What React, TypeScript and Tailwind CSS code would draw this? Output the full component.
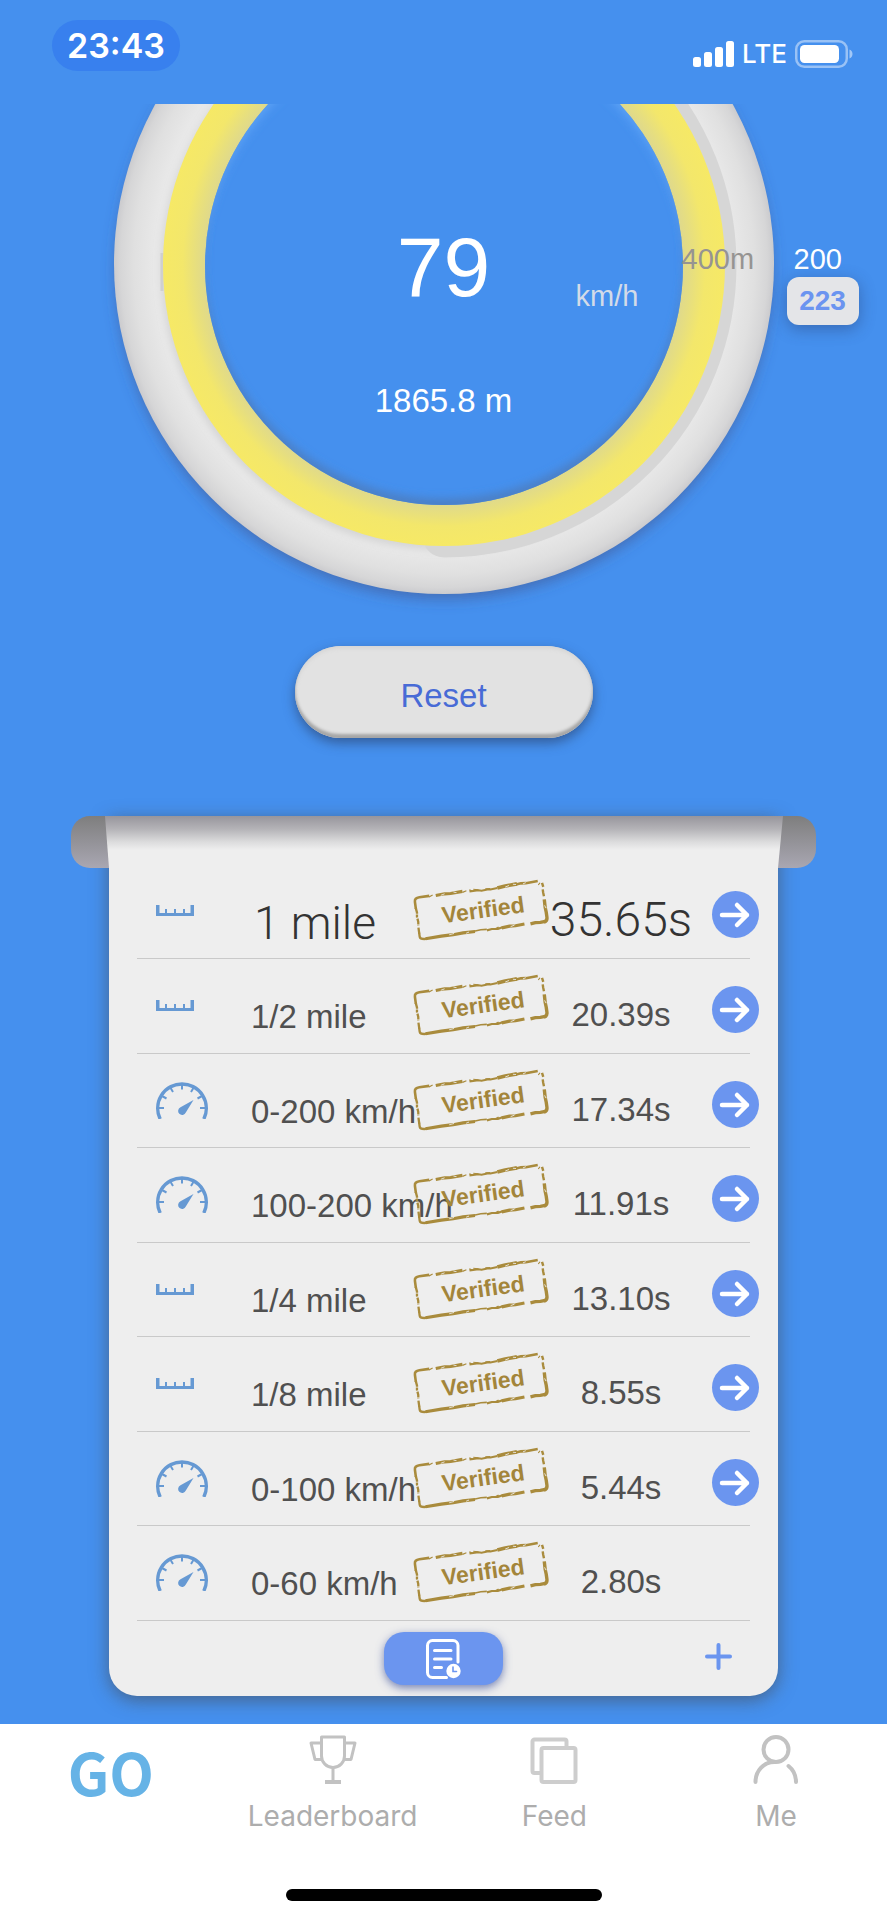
import React from "react";

interface RunResult {
    kind: "distance" | "speed";
    label: string;
    time: string;
    hasDetails: boolean;
}

const results: RunResult[] = [
    { kind: "distance", label: "1 mile", time: "35.65s", hasDetails: true },
    { kind: "distance", label: "1/2 mile", time: "20.39s", hasDetails: true },
    { kind: "speed", label: "0-200 km/h", time: "17.34s", hasDetails: true },
    { kind: "speed", label: "100-200 km/h", time: "11.91s", hasDetails: true },
    { kind: "distance", label: "1/4 mile", time: "13.10s", hasDetails: true },
    { kind: "distance", label: "1/8 mile", time: "8.55s", hasDetails: true },
    { kind: "speed", label: "0-100 km/h", time: "5.44s", hasDetails: true },
    { kind: "speed", label: "0-60 km/h", time: "2.80s", hasDetails: false },
];

function StatusBar() {
    return (
        <header className="flex h-[104px] items-start justify-between pl-[52px] pr-[34px] font-['Inter',sans-serif] text-white">
            <div className="mt-5 flex h-[51px] w-32 items-center justify-center rounded-[26px] bg-[#3880ee] text-[34px] font-semibold leading-none">
                23:43
            </div>
            <div className="mt-[38px] flex h-8 items-center gap-2">
                <svg className="h-[26px] w-[41px]" viewBox="0 0 41 26" fill="currentColor" aria-hidden="true">
                    <rect x="0" y="16" width="8" height="10" rx="2.5" />
                    <rect x="11" y="11" width="8" height="15" rx="2.5" />
                    <rect x="22" y="6" width="8" height="20" rx="2.5" />
                    <rect x="33" y="0" width="8" height="26" rx="2.5" />
                </svg>
                <span className="text-[26px] font-medium leading-none">LTE</span>
                <svg className="h-[28px] w-[58px]" viewBox="0 0 58 28" aria-hidden="true">
                    <rect x="1.25" y="1.25" width="50.5" height="25.5" rx="8" fill="none" stroke="#fff" strokeOpacity="0.45" strokeWidth="2.5" />
                    <rect x="5" y="5" width="39" height="18" rx="4.5" fill="#fff" />
                    <path d="M54.5 9.5c4 1.6 4 7.400 0 9z" fill="#fff" fillOpacity="0.5" />
                </svg>
            </div>
        </header>
    );
}

// Speed dial, cut off by the status bar at the top
function Dial() {
    return (
        <section className="relative mx-auto w-[830px] max-w-full font-['Liberation_Sans',Arial,sans-serif]">
            <svg className="block h-[520px] w-full" viewBox="0 0 830 520" aria-hidden="true">
                <defs>
                    <radialGradient id="rim" gradientUnits="userSpaceOnUse" cx="415" cy="160" r="330">
                        <stop offset="0.88" stopColor="#e8e8e8" />
                        <stop offset="0.94" stopColor="#e0e0e0" />
                        <stop offset="0.98" stopColor="#d6d6d7" />
                        <stop offset="1" stopColor="#cbcbce" />
                    </radialGradient>
                    <radialGradient id="band" gradientUnits="userSpaceOnUse" cx="415" cy="161" r="281">
                        <stop offset="0.85" stopColor="#dfd98c" />
                        <stop offset="0.88" stopColor="#e6de80" />
                        <stop offset="0.93" stopColor="#f3e76b" />
                        <stop offset="1" stopColor="#f6e966" />
                    </radialGradient>
                    <filter id="soft" x="-20%" y="-20%" width="140%" height="140%">
                        <feGaussianBlur stdDeviation="7" />
                    </filter>
                    <filter id="softer" x="-20%" y="-20%" width="140%" height="140%">
                        <feGaussianBlur stdDeviation="4" />
                    </filter>
                    <clipPath id="hole">
                        <circle cx="415" cy="162" r="239" />
                    </clipPath>
                </defs>
                <circle cx="415" cy="167" r="328" fill="#3f4a80" fillOpacity="0.5" filter="url(#soft)" />
                <circle cx="415" cy="160" r="330" fill="url(#rim)" />
                <circle cx="413" cy="165" r="280" fill="#bdbdbd" fillOpacity="0.5" filter="url(#softer)" />
                <path d="M415 -110a271 271 0 0 1 0 542" fill="none" stroke="#d6d6d6" strokeWidth="43" strokeLinecap="round" />
                <path d="M133 149v38" stroke="#cfcfcf" strokeWidth="3" />
                <circle cx="415" cy="161" r="281" fill="url(#band)" />
                <circle cx="415" cy="162" r="239" fill="#4590ee" />
                <g clipPath="url(#hole)">
                    <circle cx="415" cy="155" r="246" fill="none" stroke="#4c7fc4" strokeWidth="12" filter="url(#softer)" />
                    <circle cx="415" cy="172" r="251" fill="none" stroke="#5aa0f5" strokeWidth="18" filter="url(#softer)" />
                </g>
            </svg>
            <p className="absolute inset-x-0 top-[121px] text-center text-[84px] leading-[84px] text-white">79</p>
            <p className="absolute left-[547px] top-[178px] text-[29px] leading-[29px] text-[#d3dbe8]">km/h</p>
            <p className="absolute inset-x-0 top-[280px] text-center text-[33px] leading-[33px] text-white">1865.8 m</p>
            <p className="absolute left-[653px] top-[141px] text-[29px] leading-[29px] text-[#969492]">400m</p>
            <p className="absolute left-[765px] top-[141px] text-[29px] leading-[29px] text-white">200</p>
            <p className="absolute right-0 top-[173px] flex h-12 w-[72px] items-center justify-center rounded-xl bg-[#e4e5e8] text-[28px] font-bold leading-none text-[#6b94f0] shadow-[0_4px_16px_rgba(40,60,110,0.45)]">
                223
            </p>
        </section>
    );
}

function RulerIcon() {
    return (
        <svg className="mt-[41px] ml-[19px] h-[11px] w-[38px]" viewBox="0 0 38 11" fill="#6699d3" role="img" aria-label="Distance">
            <path d="M0 0h3.500v8h31V0H38v11H0z" />
            <path d="M9 4h2v5H9zM18 4h2v5h-2zM27 4h2v5h-2z" />
        </svg>
    );
}

function GaugeIcon() {
    return (
        <svg className="mt-7 ml-[19px] h-[37px] w-[52px]" viewBox="0 0 52 37" fill="none" stroke="#6699d3" role="img" aria-label="Speed">
            <path d="M4.200 37A24.300 24.300 0 1 1 47.800 37" strokeWidth="3.400" />
            <path d="M26 2v5.500M2 26h6M50 26h-6M5 13.500l5.500 3M47 13.500l-5.500 3M14 5l3 5M38 5l-3 5" strokeWidth="2" />
            <path d="M37.500 18l-7.700 12.500a4 4 0 1 1-5.300-5.200z" fill="#6699d3" stroke="none" />
        </svg>
    );
}

function VerifiedStamp() {
    return (
        <svg className="mt-[15px] block h-[62px] w-[136px]" viewBox="0 0 136 62" role="img" aria-label="Verified">
            <g transform="rotate(-7.800 68 30)">
                <g transform="translate(3 9)" fill="none" stroke="#a98b3c" strokeLinecap="butt">
                    <path d="M.5 12V5q0-4 5-4h10" strokeWidth="2.600" />
                    <path d="M15 2l4-1.500M49 2l4-1M56 .5l3 1.500M125 5l2-2" strokeWidth="1.200" />
                    <path d="M22 1.500l9-.5 6 .5 12-.5" strokeWidth="3.200" />
                    <path d="M56 2l9 0 3 1 6-.5 3 .5 7-.5" strokeWidth="2" />
                    <path d="M60 .5l5 1M72 1.500l5 .5" strokeWidth="1" />
                    <path d="M84 2.500l7-1 13-.5" strokeWidth="3.600" />
                    <path d="M102 1.500l6-.5 5 .5 12-.5" strokeWidth="2.600" />
                    <path d="M129 3.500l.7 4M128.800 10v3l.3 4" strokeWidth="2.400" />
                    <path d="M129 20l-.2 8 .4 5v5q0 4-3.500 4.500" strokeWidth="3.400" />
                    <path d="M112 42.500l5-.6 5 .4 5-.3" strokeWidth="3.400" />
                    <path d="M106 41.800l-9 .5-6-.4-8 .6" strokeWidth="3.200" />
                    <path d="M84 42l-5 1-6-.7-5 .7" strokeWidth="2.200" />
                    <path d="M80 41.500l-3 1M68 42l-6-.5-7 .5" strokeWidth="1.600" />
                    <path d="M56 42.500l-12-.3-10 .5-12-.2-16 .4" strokeWidth="3.200" />
                    <path d="M8 43.200q-7.500 0-7.500-3v-4" strokeWidth="2.300" />
                    <path d="M.5 11l.6 5-.6 4 .6 5-.4 4M.5 31l0 6" strokeWidth="2.300" strokeDasharray="6 .8 3 1.200" />
                    {/* worn spots in the ink */}
                    <path d="M27 2l4-1M40 .5l3 1M92 2.500l4-1M100 .8l3 .7M110 1.800l3-.8M92 42.500l4-1M30 42.200l5-.6M47 43l3-.8M128.500 26l1 3" stroke="#eeeeee" strokeWidth="0.800" />
                </g>
                <text
                    x="70"
                    y="39"
                    textAnchor="middle"
                    fill="#a3853a"
                    className="font-['Liberation_Sans',Arial,sans-serif] text-[23px] font-bold"
                >
                    Verified
                </text>
            </g>
        </svg>
    );
}

function ResultRow({ result, best }: { result: RunResult; best: boolean }) {
    return (
        <tr className="h-[94px] border-b border-[#c9c9c9] align-top">
            <td>{result.kind === "distance" ? <RulerIcon /> : <GaugeIcon />}</td>
            <th
                scope="row"
                className={`whitespace-nowrap text-left ${best
                    ? "pt-9 pl-[3px] font-['Roboto',sans-serif] text-[46px] font-light leading-[46px] text-[#333333]"
                    : "pt-10 text-[33px] font-normal leading-9 text-[#505050]"
                    }`}
            >
                {result.label}
            </th>
            <td>
                <VerifiedStamp />
            </td>
            <td
                className={`whitespace-nowrap text-center ${best
                    ? "pt-8 font-['Roboto',sans-serif] text-[48px] font-light leading-[48px] text-[#333333]"
                    : "pt-[38px] text-[33px] leading-9 text-[#505050]"
                    }`}
            >
                {result.time}
            </td>
            <td>
                {result.hasDetails && (
                    <button
                        type="button"
                        aria-label={`Open ${result.label}`}
                        className="mt-[27px] ml-[19px] block h-[47px] w-[47px] rounded-full bg-[#6b95ef]"
                    >
                        <svg className="h-full w-full" viewBox="0 0 47 47" fill="none" stroke="#fff" strokeWidth="4.500" strokeLinecap="round" strokeLinejoin="round">
                            <path d="M10 24h25M25 14l10 10-10 10" />
                        </svg>
                    </button>
                )}
            </td>
        </tr>
    );
}

// Roller that the result sheet hangs from
function Roller() {
    return (
        <svg className="pointer-events-none absolute inset-x-0 top-0 h-[52px] w-full" viewBox="0 0 745 52" preserveAspectRatio="none" aria-hidden="true">
            <defs>
                <linearGradient id="roll" x1="0" y1="0" x2="0" y2="1">
                    <stop offset="0" stopColor="#7e7e7e" />
                    <stop offset="1" stopColor="#a9a7b2" />
                </linearGradient>
                <linearGradient id="fold" x1="0" y1="0" x2="0" y2="1">
                    <stop offset="0" stopColor="#97959c" />
                    <stop offset="0.25" stopColor="#b4b3b7" />
                    <stop offset="0.5" stopColor="#dcdcdd" />
                    <stop offset="0.65" stopColor="#eeeeee" />
                    <stop offset="1" stopColor="#eeeeee" />
                </linearGradient>
            </defs>
            <rect width="745" height="52" rx="19" fill="url(#roll)" />
            <path d="M34 0h678L707 52H38z" fill="url(#fold)" />
        </svg>
    );
}

function ResultSheet() {
    return (
        <section className="relative mx-auto mt-[78px] w-[745px] max-w-full font-['Liberation_Sans',Arial,sans-serif]">
            <div className="mx-[38px] rounded-b-[28px] bg-[#eeeeee] px-7 pt-12 shadow-[0_4px_18px_rgba(70,70,70,0.6)]">
                <table className="h-[757px] w-full table-fixed border-collapse">
                    <colgroup>
                        <col className="w-[114px]" />
                        <col className="w-[162px]" />
                        <col className="w-[136px]" />
                        <col />
                        <col className="w-[57px]" />
                    </colgroup>
                    <tbody>
                        {results.map((result, i) => (
                            <ResultRow key={result.label} result={result} best={i === 0} />
                        ))}
                    </tbody>
                </table>
                <div className="grid grid-cols-3 items-center pt-[11px] pb-[11px]">
                    <button
                        type="button"
                        aria-label="History"
                        className="col-start-2 flex h-[53px] w-[119px] items-center justify-center justify-self-center rounded-[20px] bg-[#6b95ef] shadow-[0_3px_8px_rgba(70,90,160,0.7)]"
                    >
                        <svg className="h-[40px] w-[35px]" viewBox="0 0 35 40" fill="none" stroke="#fff" strokeLinecap="round">
                            <path d="M32 23V6.500a5 5 0 0 0-5-5H6.500a5 5 0 0 0-5 5v27a5 5 0 0 0 5 5H20.500" strokeWidth="3" />
                            <path d="M8.500 11.500h16.500M8.500 20h16.500M8.500 28.500h7" strokeWidth="3" />
                            <circle cx="27.500" cy="32" r="7.200" fill="#fff" stroke="none" />
                            <path d="M27 28v4.500h3.500" stroke="#6b95ef" strokeWidth="1.600" />
                        </svg>
                    </button>
                    <button type="button" aria-label="Add" className="mr-[18px] mb-1 justify-self-end text-[#6b95ef]">
                        <svg className="h-[27px] w-[27px]" viewBox="0 0 27 27" fill="none" stroke="currentColor" strokeWidth="4" strokeLinecap="round">
                            <path d="M13.500 2v23M2 13.500h23" />
                        </svg>
                    </button>
                </div>
            </div>
            <Roller />
        </section>
    );
}

function TabBar() {
    return (
        <nav className="mt-7 flex-1 bg-white font-['Inter',sans-serif] text-[28px] leading-8 text-[#adadad]">
            <div className="grid grid-cols-4">
                <a href="#go" className="flex justify-center pt-[17px] font-['Noto_Sans_CJK_SC',sans-serif] text-[58px] font-bold leading-[60px] text-[#66b3e6]">
                    GO
                </a>
                <a href="#leaderboard" className="flex flex-col items-center gap-4 pt-[11px]">
                    <svg className="h-[49px] w-[48px]" viewBox="0 0 48 49" fill="none" stroke="#c2c2c2" strokeWidth="3" strokeLinejoin="round" aria-hidden="true">
                        <path d="M12.500 2h23v19a11.500 11.500 0 0 1-23 0z" />
                        <path d="M12.500 8H2l4 16.500h7M35.500 8H46l-4 16.500h-7M24 33v13" />
                        <path d="M16 47h16" strokeWidth="4" />
                    </svg>
                    Leaderboard
                </a>
                <a href="#feed" className="flex flex-col items-center gap-4 pt-[11px]">
                    <svg className="h-[49px] w-[48px]" viewBox="0 0 48 49" fill="none" stroke="#cdcdcd" strokeWidth="4" strokeLinejoin="round" aria-hidden="true">
                        <rect x="11.500" y="13" width="34" height="34" rx="2" />
                        <path d="M10 38H4.500a2 2 0 0 1-2-2V6.500a2 2 0 0 1 2-2h30a2 2 0 0 1 2 2v5" />
                    </svg>
                    Feed
                </a>
                <a href="#me" className="flex flex-col items-center gap-4 pt-[11px]">
                    <svg className="h-[49px] w-[46px]" viewBox="0 0 46 49" fill="none" stroke="#c2c2c2" strokeWidth="4" strokeLinecap="round" aria-hidden="true">
                        <circle cx="23" cy="14.500" r="12.500" />
                        <path d="M2.500 47c0-11 8-20 19-20M35.500 31c5 4 7.500 9.500 7.500 16" />
                    </svg>
                    Me
                </a>
            </div>
            <div className="mx-auto mt-[57px] mb-[19px] h-[12px] w-[316px] rounded-full bg-black" />
        </nav>
    );
}

function App() {
    return (
        <div className="flex min-h-screen flex-col overflow-x-hidden bg-[#4590ee]">
            <StatusBar />
            <Dial />
            <button
                type="button"
                className="mx-auto mt-[22px] h-[92px] w-[298px] rounded-full bg-[#e2e2e2] pt-[6px] font-['Liberation_Sans',Arial,sans-serif] text-[33px] leading-none text-[#486bd6] shadow-[0_5px_12px_rgba(40,60,100,0.6),inset_0_-4px_3px_#a6a6a6,inset_0_2px_4px_#d4d4d4]"
            >
                Reset
            </button>
            <ResultSheet />
            <TabBar />
        </div>
    );
}

export default App;
